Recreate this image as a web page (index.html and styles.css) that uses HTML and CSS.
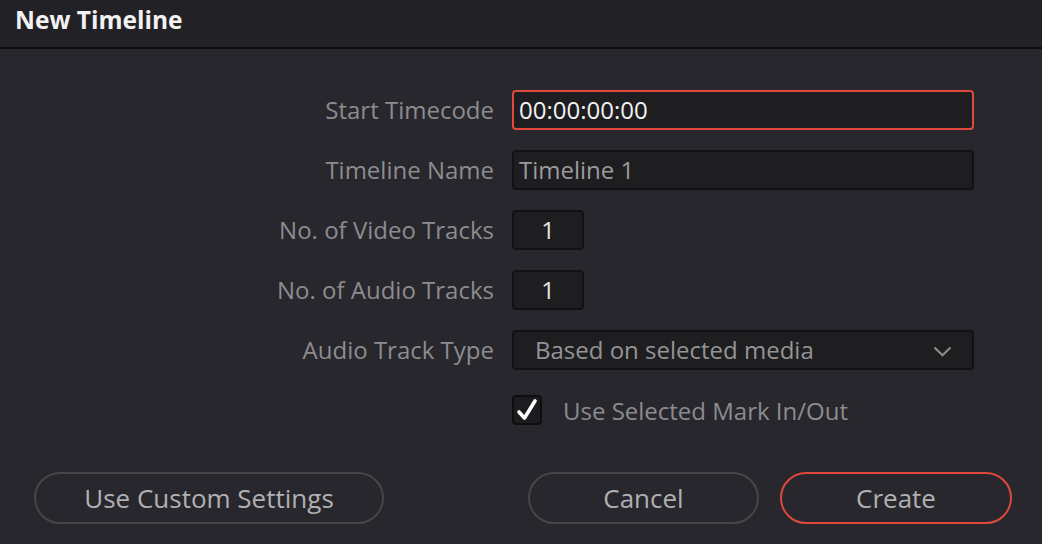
FILE: index.html
```html
<!DOCTYPE html>
<html>
<head>
<meta charset="utf-8">
<link rel="stylesheet" href="styles.css">
</head>
<body>
<div class="dialog">
  <div class="titlebar">New Timeline</div>
  <div class="content">
    <div class="form">
      <label class="label">Start Timecode</label>
      <div class="field wide active">00:00:00:00</div>

      <label class="label">Timeline Name</label>
      <div class="field wide muted">Timeline 1</div>

      <label class="label">No. of Video Tracks</label>
      <div class="field small">1</div>

      <label class="label">No. of Audio Tracks</label>
      <div class="field small">1</div>

      <label class="label">Audio Track Type</label>
      <div class="field wide select">
        <span>Based on selected media</span>
        <svg class="chev" width="19" height="11" viewBox="0 0 19 11"><path d="M1.5 1.5 L9.5 9.3 L17.5 1.5" fill="none" stroke="#8a8a8c" stroke-width="2.2"/></svg>
      </div>

      <div></div>
      <div class="checkrow">
        <span class="checkbox">
          <svg width="24" height="26" viewBox="0 0 24 26"><path d="M4 15 L9.5 21 L20 4" fill="none" stroke="#ffffff" stroke-width="3.6" stroke-linecap="round" stroke-linejoin="round"/></svg>
        </span>
        <span class="checklabel">Use Selected Mark In/Out</span>
      </div>
    </div>

    <div class="buttons">
      <button class="btn custom">Use Custom Settings</button>
      <div class="group">
        <button class="btn cancel">Cancel</button>
        <button class="btn create">Create</button>
      </div>
    </div>
  </div>
</div>
</body>
</html>
```

FILE: styles.css
```css
* { box-sizing: border-box; }
html, body {
  margin: 0;
  padding: 0;
  background: #28272d;
  font-family: "Open Sans", "Noto Sans", sans-serif;
}
.dialog {
  width: 1042px;
  height: 544px;
  display: flex;
  flex-direction: column;
}
.titlebar {
  height: 49px;
  background: #222126;
  border-bottom: 2px solid #0e0e10;
  color: #f2f2f2;
  font-weight: 700;
  font-size: 24.5px;
  padding: 3px 0 0 15px;
  line-height: 34px;
}
.content {
  flex: 1;
  display: flex;
  flex-direction: column;
}
.form {
  display: grid;
  grid-template-columns: 494px 1fr;
  column-gap: 18px;
  row-gap: 20px;
  padding-top: 41px;
  grid-auto-rows: 40px;
}
.label {
  text-align: right;
  color: #8c8c8f;
  font-size: 24px;
  line-height: 40px;
}
.field {
  height: 40px;
  background: #1e1e20;
  border: 2px solid #121214;
  border-radius: 4px;
  font-size: 24px;
  line-height: 36px;
  padding: 0 5px;
  color: #e8e8e8;
}
.field.wide { width: 462px; }
.field.active { border-color: #e2493d; color: #f2f2f2; }
.field.muted { color: #9b9b9d; }
.field.small { width: 72px; text-align: center; color: #e8e8e8; }
.field.select {
  display: flex;
  align-items: center;
  justify-content: space-between;
  padding: 0 20px 0 21px;
  color: #949496;
}
.chev { display: block; margin-top: 2px; }
.checkrow {
  display: flex;
  align-items: center;
  gap: 21px;
}
.checkbox {
  width: 30px;
  height: 30px;
  background: #1c1c1e;
  border: 2px solid #0e0e10;
  border-radius: 4px;
  display: flex;
  align-items: center;
  justify-content: center;
}
.checkbox svg { display: block; }
.checklabel {
  color: #8c8c8f;
  font-size: 24px;
}
.buttons {
  display: flex;
  justify-content: space-between;
  padding: 42px 30px 0 34px;
}
.group {
  display: flex;
  gap: 21px;
}
.btn {
  height: 52px;
  border-radius: 26px;
  background: transparent;
  border: 2px solid #46464b;
  color: #b0b0b2;
  font-family: "Open Sans", "Noto Sans", sans-serif;
  font-size: 26px;
  padding: 0;
}
.btn.custom { width: 350px; }
.btn.cancel { width: 231px; }
.btn.create { width: 232px; border-color: #e2493d; }
```
